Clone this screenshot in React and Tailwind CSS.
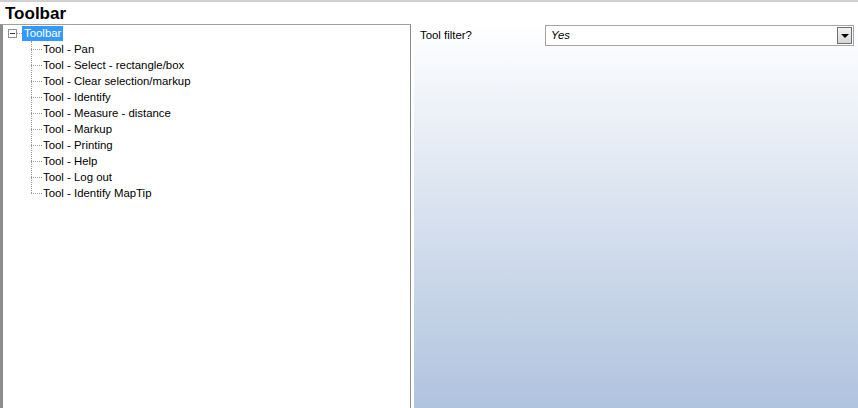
import React from 'react'

const items = [
  'Tool - Pan',
  'Tool - Select - rectangle/box',
  'Tool - Clear selection/markup',
  'Tool - Identify',
  'Tool - Measure - distance',
  'Tool - Markup',
  'Tool - Printing',
  'Tool - Help',
  'Tool - Log out',
  'Tool - Identify MapTip',
]

const App = () => {
  return (
    <div className="w-[858px] h-[408px] bg-white flex flex-col overflow-hidden border-t-2 border-[#d0d0d0] text-[11.4px] text-black"
      style={{ fontFamily: '"Liberation Sans", Arial, sans-serif' }}>
      <div className="h-[22px] pl-[5px] flex items-center text-[17px] font-bold leading-none">Toolbar</div>

      <div className="flex flex-1 min-h-0">
        {/* tree */}
        <div className="w-[411px] border-t border-l-[3px] border-r border-[#8c8c8c] border-t-[#a0a0a0] pt-[1px] relative">
          <div className="flex items-center h-[15px]">
            <div className="ml-[5px] w-[9px] h-[9px] border border-[#8f8f8f] flex items-center justify-center bg-white">
              <div className="w-[5px] h-px bg-[#333]" />
            </div>
            <div className="w-[5px] border-t border-dotted border-[#999]" />
            <span className="bg-[#3399ff] text-white px-[2px] h-[15px] leading-[15px]">Toolbar</span>
          </div>
          <div className="relative ml-[28px]">
            <div className="absolute left-0 top-0 h-[152px] border-l border-dotted border-[#999]" />
            {items.map(t => (
              <div key={t} className="flex items-center h-[16px]">
                <div className="w-[11px] border-t border-dotted border-[#999]" />
                <span className="pl-[1px] leading-[16px]">{t}</span>
              </div>
            ))}
          </div>
        </div>

        <div className="w-[3px] bg-white" />

        {/* properties */}
        <div className="flex-1 bg-gradient-to-b from-white to-[#b0c3de]">
          <div className="flex items-center h-[21px] mt-[1px]">
            <span className="pl-[6px] w-[131px]">Tool filter?</span>
            <div className="w-[309px] h-[21px] border border-[#a5a5a5] bg-white flex items-center">
              <span className="flex-1 pl-[5px] italic">Yes</span>
              <div className="w-[15px] h-[17px] mr-[1px] border border-[#6f6f6f] bg-gradient-to-b from-[#f2f2f2] to-[#d6d6d6] flex items-center justify-center">
                <div className="w-0 h-0 border-l-[4px] border-r-[4px] border-t-[4px] border-l-transparent border-r-transparent border-t-black" />
              </div>
            </div>
          </div>
        </div>
      </div>
    </div>
  )
}

export default App
